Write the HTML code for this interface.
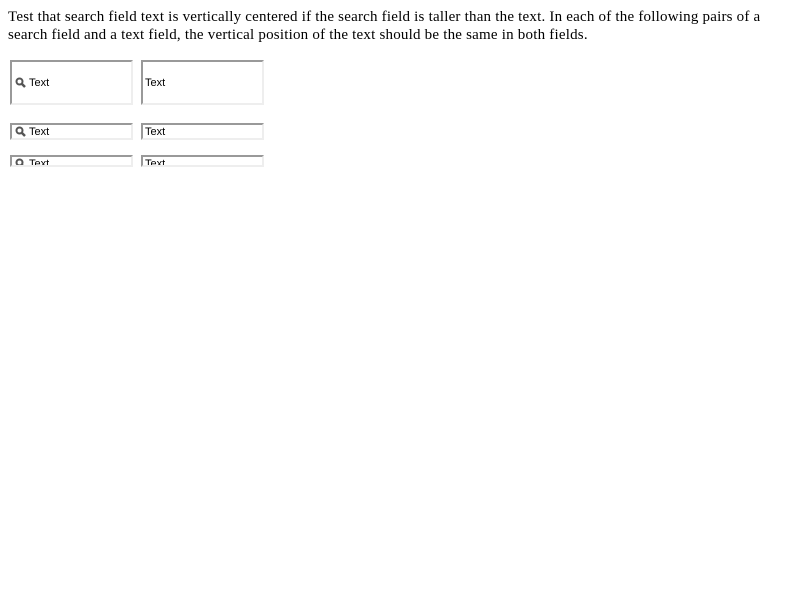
<!DOCTYPE html>
<html><head><style>
body{margin:0;background:#fff;}
p{position:absolute;left:8px;top:8px;margin:0;width:770px;font:15px/18px "Liberation Serif",serif;letter-spacing:0.21px;color:#000;}
.f{position:absolute;box-sizing:border-box;border-top:2px solid #999;border-left:2px solid #999;border-right:2px solid #eee;border-bottom:2px solid #eee;overflow:hidden;font:11px "Liberation Sans",sans-serif;color:#000;background:#fff;}
.f span{position:absolute;left:2px;}
.f svg{position:absolute;left:3px;}
.s span{left:17px;}
</style></head><body>
<p>Test that search field text is vertically centered if the search field is taller than the text. In each of the following pairs of a search field and a text field, the vertical position of the text should be the same in both fields.</p>

<div class="f s" style="left:10px;top:60px;width:123px;height:45px"><svg width="11" height="11" style="top:15px" viewBox="0 0 11 11"><circle cx="4.5" cy="4.5" r="3" fill="none" stroke="#555" stroke-width="2"/><path d="M6.5 6.5L10 10" stroke="#555" stroke-width="2.5"/></svg><span style="top:15px">Text</span></div>
<div class="f" style="left:141px;top:60px;width:123px;height:45px"><span style="top:15px">Text</span></div>

<div class="f s" style="left:10px;top:123px;width:123px;height:17px"><svg width="11" height="11" style="top:1px" viewBox="0 0 11 11"><circle cx="4.5" cy="4.5" r="3" fill="none" stroke="#555" stroke-width="2"/><path d="M6.5 6.5L10 10" stroke="#555" stroke-width="2.5"/></svg><span style="top:1px">Text</span></div>
<div class="f" style="left:141px;top:123px;width:123px;height:17px"><span style="top:1px">Text</span></div>

<div class="f s" style="left:10px;top:155px;width:123px;height:12px"><svg width="11" height="11" style="top:1px" viewBox="0 0 11 11"><circle cx="4.5" cy="4.5" r="3" fill="none" stroke="#555" stroke-width="2"/><path d="M6.5 6.5L10 10" stroke="#555" stroke-width="2.5"/></svg><span style="top:1px">Text</span></div>
<div class="f" style="left:141px;top:155px;width:123px;height:12px"><span style="top:1px">Text</span></div>
</body></html>
